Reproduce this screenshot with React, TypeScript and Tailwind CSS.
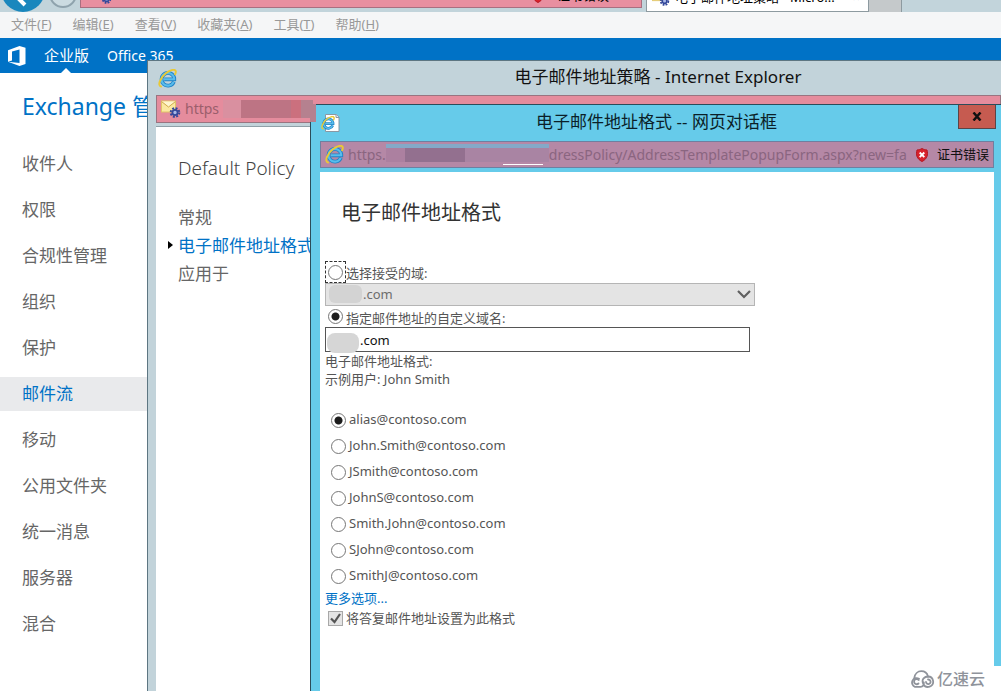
import { useId, useState } from "react";

const ui = "font-['Noto_Sans','Noto_Sans_CJK_SC',sans-serif]";

function IeLogo({ className }: { className: string }) {
  return (
    <svg viewBox="0 0 20 20" className={className} aria-hidden="true">
      <path d="M16.700 13.400a6.700 6.700 0 1 1 .4-3.800v1.400H6.500" fill="none" stroke="#2383c6" strokeWidth="4" />
      <path d="M16.500 13.500a6.700 6.700 0 1 1 .5-3.700v1H6.200" fill="none" stroke="#58bdec" strokeWidth="2.200" />
      <path
        d="M3.200 18.400C-1 17.500 2.500 9 8.200 4.500 12 1.300 17.200-.3 18.500 1.800c.6 1.200.2 2.500-.5 3.700"
        fill="none"
        stroke="#e9c936"
        strokeWidth="2"
        strokeLinecap="round"
      />
    </svg>
  );
}

function PageLogo() {
  return (
    <span className="relative block h-5 w-5 shrink-0">
      <svg viewBox="0 0 20 20" className="h-5 w-5" aria-hidden="true">
        <path d="M4.500 1.500h11l2.500 2.500v14.500H4.500z" fill="#fff" stroke="#8a98a3" />
        <path d="M15 1.500V4.500H18" fill="#e6ebef" stroke="#8a98a3" />
      </svg>
      <IeLogo className="absolute top-[3px] left-0 h-3.5 w-3.5" />
    </span>
  );
}

function MailGear({ className }: { className: string }) {
  return (
    <svg viewBox="0 0 20 18" className={className} aria-hidden="true">
      <rect x="0.500" y="1" width="14" height="11" fill="#fbe9a0" stroke="#e0c468" />
      <path d="M.5 1.500l7 5.500 7-5.500" fill="#fff6cf" stroke="#cfa94a" />
      <circle cx="14" cy="12.500" r="4.300" fill="none" stroke="#33479a" strokeWidth="2" strokeDasharray="2 1.380" />
      <circle cx="14" cy="12.500" r="2.600" fill="#a9b8e6" stroke="#33479a" strokeWidth="1.800" />
    </svg>
  );
}

function ErrorShield({ className }: { className: string }) {
  return (
    <svg viewBox="0 0 14 14" className={className} aria-hidden="true">
      <path d="M7 .5c1.600 1 3.200 1.300 5 1.500 1.200 4.500.5 8.800-5 11.500C1.500 10.800.8 6.500 2 2 3.800 1.800 5.400 1.500 7 .5z" fill="#d8222c" stroke="#b5151f" />
      <path d="M4.700 4.500l4.600 4.600m0-4.600L4.700 9.100" stroke="#fff" strokeWidth="1.900" />
    </svg>
  );
}

const menus = [
  ["文件", "F"],
  ["编辑", "E"],
  ["查看", "V"],
  ["收藏夹", "A"],
  ["工具", "T"],
  ["帮助", "H"],
];

const sections = ["收件人", "权限", "合规性管理", "组织", "保护", "邮件流", "移动", "公用文件夹", "统一消息", "服务器", "混合"];

const formats = [
  "alias@contoso.com",
  "John.Smith@contoso.com",
  "JSmith@contoso.com",
  "JohnS@contoso.com",
  "Smith.John@contoso.com",
  "SJohn@contoso.com",
  "SmithJ@contoso.com",
];

const radio =
  "h-[15px] w-[15px] shrink-0 appearance-none rounded-full border border-[#767676] bg-white checked:bg-[radial-gradient(circle,#1c1c1c_0_3.5px,transparent_4.5px)]";

function BrowserChrome() {
  return (
    <header>
      <div className="flex h-3 items-end overflow-hidden bg-[#c2d4db]">
        <button aria-label="后退" className="ml-px h-11 w-11 shrink-0 rounded-full bg-[#1a87bd]">
          <svg viewBox="0 0 44 44" className="h-11 w-11" aria-hidden="true">
            <path d="M24 37l-8-8 8-8" fill="none" stroke="#fff" strokeWidth="4" />
          </svg>
        </button>
        <button aria-label="前进" className="mb-1 ml-1 h-7 w-7 shrink-0 rounded-full border-2 border-[#8fa3ad] bg-[#cbdbe1]" />
        <div className="mb-1 ml-[3px] flex h-6 w-[562px] items-center justify-between border border-[#a96f80] bg-[#e88fa0] px-2 text-[13px]">
          <MailGear className="ml-1 h-4 w-5" />
          <span className="flex items-center gap-3 pr-6">
            <ErrorShield className="h-3.5 w-3.5" />
            证书错误
          </span>
        </div>
        <div className="ml-1 flex h-7 w-[223px] shrink-0 items-center gap-1 border-x border-b border-[#8d9aa0] bg-white px-1 text-[13px]">
          <MailGear className="h-4 w-5 shrink-0" />
          <span className="flex-1 whitespace-nowrap">电子邮件地址策略 - Micro...</span>
          <span className="pr-1 text-gray-500">×</span>
        </div>
        <div className="h-7 w-[33px] border-r border-[#8d9aa0] bg-[#c5c9cb]" />
      </div>
      <nav className="flex h-[26px] items-center gap-[21px] bg-[#f5f6f7] pl-[11px] text-[13px] text-[#999]">
        {menus.map(([name, key]) => (
          <button key={key} className="whitespace-nowrap">
            {name}(<u>{key}</u>)
          </button>
        ))}
      </nav>
    </header>
  );
}

function SuiteBar() {
  return (
    <div className="flex h-[35px] items-center bg-[#0072c6] pl-2 text-sm text-white">
      <svg viewBox="0 0 18 20" className="h-5 w-[18px]" aria-label="Office" role="img">
        <path d="M0 4.200L11.500 0 17.500 1.800V18l-6 2L0 15.700l11.500 1.400V3.600L4 5.400v9L0 15.700z" fill="#fff" />
      </svg>
      <a href="#enterprise" className="relative ml-[18px] flex h-full items-center text-[15px]">
        企业版
        <svg viewBox="0 0 10 5" className="absolute bottom-0 left-[17px] h-[5px] w-[10px]" aria-hidden="true">
          <path d="M0 5l5-5 5 5z" fill="#fff" />
        </svg>
      </a>
      <a href="#office" className="ml-[18px]">
        Office 365
      </a>
    </div>
  );
}

function AdminCenter() {
  return (
    <main className="w-[147px] flex-1 overflow-hidden bg-white">
      <h1 className="pt-[17px] pl-[22px] text-[23px] leading-8 whitespace-nowrap text-[#0072c6]">Exchange 管</h1>
      <nav className="pt-[25px]">
        {sections.map((name) => (
          <a
            key={name}
            href="#section"
            className={
              name === "邮件流"
                ? "mb-3 block bg-[#e9eaec] pl-[22px] text-[17px] leading-[34px] text-[#0072c6]"
                : "mb-3 block pl-[22px] text-[17px] leading-[34px] text-[#666]"
            }
          >
            {name}
          </a>
        ))}
      </nav>
    </main>
  );
}

function PolicyWindow() {
  return (
    <section className="absolute top-[60px] right-0 bottom-0 left-[147px] flex flex-col border-t border-l border-[#5d7682] bg-[#c2d3da] pl-2">
      <div className="flex h-[34px] items-center pl-0.5">
        <IeLogo className="h-[19px] w-[19px]" />
        <h2 className="flex-1 pb-0.5 pl-[138px] text-center text-[17px] text-[#111]">电子邮件地址策略 - Internet Explorer</h2>
      </div>
      <div className="flex h-7 shrink-0 items-center border border-[#9a7480] bg-[#e58c9d] pl-1 text-sm text-[#9b5e6c]">
        <MailGear className="h-[18px] w-5" />
        <span className="ml-1">https</span>
        <span className="ml-1 flex h-[18px]">
          <span className="w-[18px] bg-[#d990a0]" />
          <span className="w-[50px] bg-[#bd7484]" />
          <span className="w-[10px] bg-[#cb707e]" />
          <span className="w-3 bg-[#b5818f]" />
        </span>
      </div>
      <div className="mt-[3px] flex-1 border-t border-[#8fa0a8] bg-white pt-[25px] pl-[22px]">
        <h3 className="text-[19px] leading-8 font-light text-[#444]">Default Policy</h3>
        <nav className="mt-5 flex flex-col text-[17px] leading-7 text-[#666]">
          <a href="#general">常规</a>
          <a href="#format" className="relative text-[#0072c6]">
            <span className="absolute top-[9px] -left-2.5 border-y-4 border-l-[5px] border-y-transparent border-l-black" />
            电子邮件地址格式
          </a>
          <a href="#apply">应用于</a>
        </nav>
      </div>
    </section>
  );
}

function FormatForm() {
  const id = useId();
  const [source, setSource] = useState("custom");
  const [format, setFormat] = useState(formats[0]);
  const [domain, setDomain] = useState(".com");
  return (
    <form className="pt-[25px] pl-[5px] text-[13px] text-[#555]">
      <h3 className="pl-4 text-xl leading-8 text-[#333]">电子邮件地址格式</h3>
      <div className="mt-8 flex h-[22px] items-center">
        <span className="flex h-full w-[21px] items-center justify-center border border-dashed border-[#333]">
          <input id={id + "a"} type="radio" name="source" className={radio} checked={source === "accepted"} onChange={() => setSource("accepted")} />
        </span>
        <label htmlFor={id + "a"} className="pt-1">选择接受的域:</label>
      </div>
      <div className="relative w-[430px] max-w-full">
        <select
          aria-label="选择接受的域"
          disabled
          className="block h-[23px] w-full appearance-none border border-[#b5b5b5] bg-[#e4e4e4] pl-[37px] text-[13px] text-[#6d6d6d] opacity-100"
        >
          <option>.com</option>
        </select>
        <span className="absolute top-0.5 left-1 h-[18px] w-[33px] rounded-md bg-[#d3d3d3]" />
        <svg viewBox="0 0 14 9" className="absolute top-[7px] right-1 h-[9px] w-3.5" aria-hidden="true">
          <path d="M1 1l6 6 6-6" fill="none" stroke="#606060" strokeWidth="2.200" />
        </svg>
      </div>
      <div className="flex h-[21px] items-center gap-[3px] pl-[3px]">
        <input id={id + "c"} type="radio" name="source" className={radio} checked={source === "custom"} onChange={() => setSource("custom")} />
        <label htmlFor={id + "c"} className="pt-1">指定邮件地址的自定义域名:</label>
      </div>
      <div className="relative w-[425px] max-w-full">
        <input
          aria-label="自定义域名"
          value={domain}
          onChange={(e) => setDomain(e.target.value)}
          className="block h-[25px] w-full border border-[#555] bg-white pl-[34px] text-[13px] text-[#111]"
        />
        <span className="absolute top-1.5 left-0.5 h-5 w-8 rounded-lg bg-[#d6d6d6]" />
      </div>
      <p className="leading-[18px]">电子邮件地址格式:</p>
      <p className="leading-[18px]">示例用户: John Smith</p>
      <fieldset className="mt-[19px] pl-1.5" aria-label="电子邮件地址格式">
        {formats.map((f) => (
          <div key={f} className="flex h-[26px] items-center gap-[3px]">
            <input id={id + f} type="radio" name="format" className={radio} checked={format === f} onChange={() => setFormat(f)} />
            <label htmlFor={id + f}>{f}</label>
          </div>
        ))}
      </fieldset>
      <a href="#more" className="block leading-[18px] text-[#0072c6]">更多选项...</a>
      <div className="flex h-[22px] items-center gap-[3px] pl-[3px]">
        <span className="relative h-[15px] w-[15px]">
          <input id={id + "r"} type="checkbox" defaultChecked disabled className="block h-[15px] w-[15px] appearance-none border border-[#a8a8a8] bg-[#e4e4e4]" />
          <svg viewBox="0 0 15 15" className="absolute inset-0 h-[15px] w-[15px]" aria-hidden="true">
            <path d="M3 7.500l3.500 3.500L12 3" fill="none" stroke="#555" strokeWidth="2.200" />
          </svg>
        </span>
        <label htmlFor={id + "r"} className="pt-0.5">将答复邮件地址设置为此格式</label>
      </div>
    </form>
  );
}

function FormatDialog() {
  return (
    <section className="absolute top-[104px] right-0 bottom-0 left-[310px] flex flex-col border-t border-l border-[#2c4c5a] bg-[#66cbea] pr-[7px] pl-2">
      <span className="absolute -top-px -left-px h-[18px] w-1.5 bg-[#b5818f]" />
      <div className="relative flex h-9 items-center pl-0.5">
        <PageLogo />
        <h2 className="flex-1 pr-[22px] pb-0.5 text-center text-[17px] text-[#0b1f28]">电子邮件地址格式 -- 网页对话框</h2>
        <button aria-label="关闭" className="absolute top-0 -right-0.5 flex h-6 w-[38px] items-center justify-center border border-t-0 border-[#5b4446] bg-[#c65b50]">
          <svg viewBox="0 0 10 9" className="h-[9px] w-2.5" aria-hidden="true">
            <path d="M1.500.5l7 8m0-8l-7 8" stroke="#111" strokeWidth="2.500" />
          </svg>
        </button>
      </div>
      <div className="ml-px flex h-[27px] shrink-0 items-center border border-[#6f7fa0] bg-[#b588a6] pr-1 pl-1 text-sm text-[#8a6580]">
        <IeLogo className="h-[19px] w-[19px] shrink-0" />
        <span className="ml-1">https.</span>
        <span className="relative flex h-[15px] shrink-0">
          <span className="absolute inset-x-0 -top-[3px] h-1 bg-[#84a9c8]" />
          <span className="absolute right-1.5 -bottom-[3px] h-px w-10 bg-white" />
          <span className="w-[19px] bg-[#ac80a0]" />
          <span className="w-[60px] bg-[#93708f]" />
          <span className="w-[84px] bg-[#a984a3]" />
        </span>
        <span className="min-w-0 flex-1 overflow-hidden whitespace-nowrap">dressPolicy/AddressTemplatePopupForm.aspx?new=false</span>
        <ErrorShield className="mx-2 h-3.5 w-3.5 shrink-0" />
        <span className="shrink-0 text-[13px] text-[#111]">证书错误</span>
      </div>
      <div className="mt-1 ml-px flex-1 bg-white">
        <FormatForm />
      </div>
    </section>
  );
}

function Watermark() {
  return (
    <div className="absolute right-0 bottom-0 flex h-[25px] items-center gap-0.5 bg-white pr-4 text-base font-medium text-[#8f939b]">
      <svg viewBox="0 0 26 18" className="h-[18px] w-[26px]" aria-hidden="true" fill="none" stroke="#8f939b" strokeWidth="1.800" strokeLinecap="round">
        <path d="M5.300 7.800C5.800 4 8.700 1.200 12.300 1.200c3.400 0 5.900 2.100 6.700 5.300" />
        <path d="M10 8.800a4.500 4.500 0 1 0-4 8h5.500c2.600 0 3.500-2 3.300-4.300M19 6.500a5.200 5.200 0 1 1-4.600 7.700c-.9-1.800-1.300-4.200.2-5.900C15.800 7 17.300 6.500 19 6.500z" />
        <path d="M9.500 13.500a2.600 2.600 0 1 1 .2-3.500M17 12a2.300 2.300 0 1 0 2-2.500" />
      </svg>
      亿速云
    </div>
  );
}

export default function App() {
  return (
    <div className={`relative flex min-h-screen flex-col overflow-hidden bg-white ${ui}`}>
      <BrowserChrome />
      <SuiteBar />
      <AdminCenter />
      <PolicyWindow />
      <FormatDialog />
      <Watermark />
    </div>
  );
}
